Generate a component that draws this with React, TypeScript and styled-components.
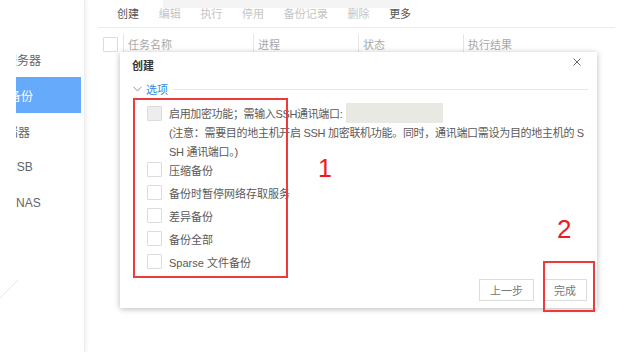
import React from "react";
import styled, { createGlobalStyle } from "styled-components";

const Global = createGlobalStyle`
  html, body { margin: 0; padding: 0; background: #fff; }
  body { font-family: "Liberation Sans", "Noto Sans CJK SC", sans-serif; }
  * { box-sizing: border-box; }
`;

const Page = styled.div`
  position: relative;
  display: flex;
  width: 627px;
  height: 352px;
  overflow: hidden;
  background: #fff;
`;

const Sidebar = styled.nav`
  width: 85px;
  flex: none;
  padding: 41px 3px 0 16px;
  border-right: 1px solid #ececec;
  box-shadow: 2px 0 3px rgba(0, 0, 0, 0.05);
  background: linear-gradient(135deg, transparent 49.6%, #e6e6e6 50%, transparent 50.6%) no-repeat -4px 280px / 22px 22px;
`;

const NavList = styled.ul`
  list-style: none;
  margin: 0;
  padding: 0;
  overflow: hidden;
`;

const NavItem = styled.li<{ $active?: boolean }>`
  height: 36px;
  display: flex;
  align-items: center;
  white-space: nowrap;
  font-size: 12px;
  color: ${(p) => (p.$active ? "#fff" : "#666")};
  background: ${(p) => (p.$active ? "#66aafc" : "transparent")};
`;

const NavLabel = styled.span<{ $shift: number }>`
  margin-left: ${(p) => p.$shift}px;
`;

const Main = styled.main`
  flex: 1;
  padding: 0 12px 0 13px;
  background: linear-gradient(#f4f4f4, #f4f4f4) no-repeat 78px 0 / 237px 8px;
`;

const Toolbar = styled.div`
  height: 28px;
  display: flex;
  align-items: center;
  gap: 19.7px;
  padding: 0 0 1px 19px;
  border-bottom: 1px solid #ececec;
`;

const ToolItem = styled.span<{ $enabled?: boolean }>`
  font-size: 11px;
  color: ${(p) => (p.$enabled ? "#555" : "#c4c4c4")};
`;

const HeaderRow = styled.div`
  height: 32px;
  display: flex;
  align-items: center;
`;

const CheckCell = styled.div`
  width: 25px;
  padding-left: 5px;
  display: flex;
  align-items: center;
`;

const HeadCell = styled.div<{ $w: number }>`
  width: ${(p) => p.$w}px;
  height: 20px;
  display: flex;
  align-items: center;
  padding-left: 4px;
  border-left: 1px solid #e6e6e6;
  font-size: 11px;
  color: #a8a8a8;
`;

const Box = styled.span<{ $disabled?: boolean }>`
  display: inline-block;
  flex: none;
  width: 15px;
  height: 15px;
  border: 1px solid #dcdcdc;
  border-radius: 1px;
  background: ${(p) => (p.$disabled ? "#ededed" : "#fff")};
`;

const Dialog = styled.section`
  position: absolute;
  left: 120px;
  top: 52px;
  width: 477px;
  height: 256px;
  display: flex;
  flex-direction: column;
  background: #fff;
  box-shadow: 0 1px 6px rgba(0, 0, 0, 0.28);
  padding: 0 10px 7px 12px;
`;

const DialogHeader = styled.header`
  height: 26px;
  display: flex;
  align-items: center;
  justify-content: space-between;
`;

const Title = styled.h2`
  margin: 0;
  font-size: 11px;
  font-weight: bold;
  color: #333;
`;

const Close = styled.button`
  border: 0;
  background: none;
  padding: 0;
  margin: -6px 6px 0 0;
  width: 8px;
  height: 8px;
  display: flex;
  cursor: pointer;
`;

const Legend = styled.div`
  height: 22px;
  display: flex;
  align-items: center;
  gap: 4px;
  padding-left: 1px;
  margin-right: -1px;
`;

const LegendText = styled.span`
  font-size: 11px;
  color: #2f8ae6;
`;

const LegendLine = styled.span`
  flex: 1;
  height: 1px;
  margin-left: 1px;
  background: #e6e6e6;
`;

const Options = styled.div`
  margin-top: 3px;
  padding-left: 15px;
  display: flex;
  flex-direction: column;
`;

const OptionRow = styled.label<{ $h: number }>`
  height: ${(p) => p.$h}px;
  display: flex;
  align-items: center;
  gap: 7px;
  font-size: 11px;
  color: #5a5a5a;
  white-space: nowrap;
`;

const OptionText = styled.span<{ $tight?: boolean }>`
  letter-spacing: ${(p) => (p.$tight ? "-0.35px" : "0")};
`;

const PortInput = styled.span`
  display: inline-block;
  width: 97px;
  height: 20px;
  margin-left: -3px;
  background: #e9e9e3;
`;

const Note = styled.p`
  margin: 1px 0 -4px 22px;
  font-size: 11px;
  line-height: 19px;
  color: #5a5a5a;
  white-space: nowrap;
  letter-spacing: -0.3px;
`;

const Footer = styled.footer`
  margin-top: auto;
  display: flex;
  justify-content: flex-end;
  gap: 9px;
`;

const Btn = styled.button<{ $w: number }>`
  width: ${(p) => p.$w}px;
  height: 22px;
  padding: 0;
  border: 1px solid #dcdcdc;
  background: #fff;
  font-family: inherit;
  font-size: 11px;
  color: #777;
`;

const Mark = styled.span<{ $x: number; $y: number; $w: number; $h: number }>`
  position: absolute;
  left: ${(p) => p.$x}px;
  top: ${(p) => p.$y}px;
  width: ${(p) => p.$w}px;
  height: ${(p) => p.$h}px;
  border: 2px solid #ee3a3a;
  pointer-events: none;
`;

const Num = styled.span<{ $x: number; $y: number; $size: number }>`
  position: absolute;
  left: ${(p) => p.$x}px;
  top: ${(p) => p.$y}px;
  font-family: "Liberation Sans", sans-serif;
  font-size: ${(p) => p.$size}px;
  line-height: 1;
  color: #f01c1c;
`;

const navItems = [
  { label: "服务器", shift: -11 },
  { label: "备份", shift: -7, active: true },
  { label: "存储器", shift: -22 },
  { label: "USB", shift: -8 },
  { label: "NAS", shift: 0 },
];

const tools = [
  { label: "创建", enabled: true },
  { label: "编辑" },
  { label: "执行" },
  { label: "停用" },
  { label: "备份记录" },
  { label: "删除" },
  { label: "更多", enabled: true },
];

const options = ["压缩备份", "备份时暂停网络存取服务", "差异备份", "备份全部", "Sparse 文件备份"];

export default function App() {
  return (
    <>
      <Global />
      <Page>
        <Sidebar>
          <NavList>
            {navItems.map((n) => (
              <NavItem key={n.label} $active={n.active}>
                <NavLabel $shift={n.shift}>{n.label}</NavLabel>
              </NavItem>
            ))}
          </NavList>
        </Sidebar>
        <Main>
          <Toolbar>
            {tools.map((t) => (
              <ToolItem key={t.label} $enabled={t.enabled}>
                {t.label}
              </ToolItem>
            ))}
          </Toolbar>
          <HeaderRow>
            <CheckCell>
              <Box />
            </CheckCell>
            <HeadCell $w={130}>任务名称</HeadCell>
            <HeadCell $w={105}>进程</HeadCell>
            <HeadCell $w={105}>状态</HeadCell>
            <HeadCell $w={150}>执行结果</HeadCell>
          </HeaderRow>
        </Main>
        <Dialog>
          <DialogHeader>
            <Title>创建</Title>
            <Close aria-label="关闭">
              <svg width="8" height="8" viewBox="0 0 8 8">
                <path d="M0.5 0.5 L7.5 7.5 M7.5 0.5 L0.5 7.5" stroke="#666" strokeWidth="1" fill="none" />
              </svg>
            </Close>
          </DialogHeader>
          <Legend>
            <svg width="9" height="6" viewBox="0 0 9 6">
              <path d="M0.5 0.8 L4.5 5 L8.5 0.8" stroke="#8a98a8" strokeWidth="1" fill="none" />
            </svg>
            <LegendText>选项</LegendText>
            <LegendLine />
          </Legend>
          <Options>
            <OptionRow $h={20}>
              <Box $disabled />
              <OptionText $tight>启用加密功能；需输入SSH通讯端口:</OptionText>
              <PortInput />
            </OptionRow>
            <Note>
              (注意：需要目的地主机开启 SSH 加密联机功能。同时，通讯端口需设为目的地主机的 S
              <br />
              SH 通讯端口。)
            </Note>
            {options.map((o) => (
              <OptionRow key={o} $h={23}>
                <Box />
                <OptionText>{o}</OptionText>
              </OptionRow>
            ))}
          </Options>
          <Footer>
            <Btn $w={55}>上一步</Btn>
            <Btn $w={44}>完成</Btn>
          </Footer>
          <Mark $x={13} $y={46} $w={155} $h={180} />
          <Mark $x={423} $y={209} $w={52} $h={51} />
          <Num $x={198} $y={104} $size={25}>1</Num>
          <Num $x={437} $y={164} $size={26}>2</Num>
        </Dialog>
      </Page>
    </>
  );
}
